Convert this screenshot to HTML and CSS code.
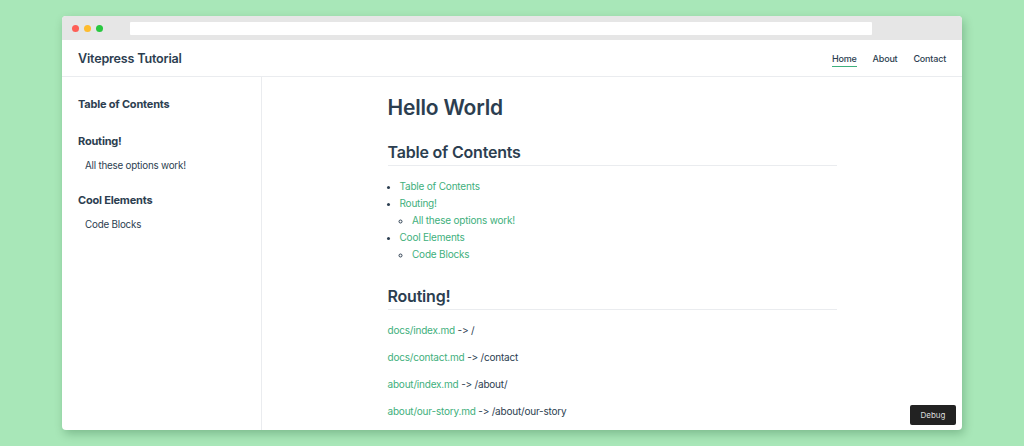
FILE: index.html
```html
<!DOCTYPE html>
<html lang="en">
<head>
<meta charset="utf-8">
<title>Vitepress Tutorial</title>
<link rel="stylesheet" href="styles.css">
</head>
<body>
<div class="window">
  <div class="titlebar">
    <div class="dots">
      <span class="dot red"></span>
      <span class="dot yellow"></span>
      <span class="dot green"></span>
    </div>
    <div class="urlbar"></div>
  </div>
  <header class="navbar">
    <a class="site-title" href="#">Vitepress Tutorial</a>
    <nav class="nav">
      <a class="nav-link active" href="#">Home</a>
      <a class="nav-link" href="#">About</a>
      <a class="nav-link" href="#">Contact</a>
    </nav>
  </header>
  <div class="main">
    <aside class="sidebar">
      <div class="side-group solo">
        <a class="side-heading" href="#">Table of Contents</a>
      </div>
      <div class="side-group">
        <a class="side-heading" href="#">Routing!</a>
        <a class="side-link" href="#">All these options work!</a>
      </div>
      <div class="side-group">
        <a class="side-heading" href="#">Cool Elements</a>
        <a class="side-link" href="#">Code Blocks</a>
      </div>
    </aside>
    <main class="content">
      <div class="doc">
        <h1>Hello World</h1>
        <h2 class="first-h2">Table of Contents</h2>
        <ul class="toc">
          <li><a href="#">Table of Contents</a></li>
          <li><a href="#">Routing!</a>
            <ul><li><a href="#">All these options work!</a></li></ul>
          </li>
          <li><a href="#">Cool Elements</a>
            <ul><li><a href="#">Code Blocks</a></li></ul>
          </li>
        </ul>
        <h2>Routing!</h2>
        <p><a href="#">docs/index.md</a> -&gt; /</p>
        <p><a href="#">docs/contact.md</a> -&gt; /contact</p>
        <p><a href="#">about/index.md</a> -&gt; /about/</p>
        <p><a href="#">about/our-story.md</a> -&gt; /about/our-story</p>
      </div>
      <button class="debug">Debug</button>
    </main>
  </div>
</div>
</body>
</html>
```
FILE: styles.css
```css
* { box-sizing: border-box; }

html, body {
  margin: 0;
  height: 100%;
}

body {
  background: #a8e7b8;
  padding: 16px 62px;
  font-family: "Inter", "Noto Sans", sans-serif;
  font-feature-settings: "calt" 0, "liga" 0;
  letter-spacing: -0.02em;
  color: #2c3e50;
  font-size: 10px;
  overflow: hidden;
}

a { text-decoration: none; color: inherit; }

.window {
  width: 900px;
  height: 414px;
  background: #fff;
  border-radius: 4px;
  box-shadow: 2px 4px 10px rgba(0, 60, 20, 0.25);
  overflow: hidden;
  display: flex;
  flex-direction: column;
}

.titlebar {
  height: 24px;
  flex: none;
  background: #e6e6e6;
  display: flex;
  align-items: center;
  padding-left: 10px;
}

.dots {
  display: flex;
  gap: 5px;
}

.dot {
  width: 7px;
  height: 7px;
  border-radius: 50%;
}
.dot.red { background: #fe5f57; }
.dot.yellow { background: #febc2e; }
.dot.green { background: #28c840; }

.urlbar {
  margin-left: 27px;
  margin-top: 1px;
  width: 742px;
  height: 13px;
  background: #fff;
  border-radius: 1px;
}

.navbar {
  height: 37px;
  flex: none;
  border-bottom: 1px solid #eaecef;
  display: flex;
  align-items: center;
  justify-content: space-between;
  padding: 0 16px;
}

.site-title {
  font-size: 12.6px;
  font-weight: 600;
  color: #2c3e50;
}

.nav {
  display: flex;
  gap: 16px;
}

.nav-link {
  font-size: 9px;
  font-weight: 500;
  line-height: 15px;
  padding-top: 1px;
  border-bottom: 1.5px solid transparent;
}

.nav-link.active {
  border-bottom-color: #3eaf7c;
}

.main {
  flex: 1;
  display: flex;
  min-height: 0;
}

.sidebar {
  width: 200px;
  flex: none;
  border-right: 1px solid #eaecef;
  padding: 19px 0 0 16px;
  display: flex;
  flex-direction: column;
}

.side-group {
  display: flex;
  flex-direction: column;
  margin-bottom: 18px;
}

.side-group.solo {
  margin-bottom: 21px;
}

.side-heading {
  font-size: 11px;
  font-weight: 700;
  line-height: 16px;
}

.side-link {
  font-size: 9.8px;
  padding-left: 7px;
  margin-top: 9px;
  line-height: 16px;
}

.content {
  flex: 1;
  position: relative;
  display: flex;
  justify-content: center;
}

.doc {
  width: 449px;
  padding-top: 17px;
}

h1 {
  margin: 0;
  font-size: 21px;
  font-weight: 600;
  line-height: 28px;
}

h2 {
  margin: 20px 0 0;
  font-size: 16px;
  font-weight: 600;
  line-height: 21px;
  padding-bottom: 2px;
  border-bottom: 1px solid #eaecef;
}

.toc + h2 {
  margin-top: 23px;
}

.toc {
  margin: 12px 0 0;
  padding-left: 12px;
  line-height: 17px;
}

.toc ul {
  margin: 0;
  padding-left: 12.5px;
  list-style-type: circle;
}

.toc a,
p a {
  color: #3eaf7c;
}

p {
  margin: 10px 0 0;
  line-height: 17px;
}

h2 + p {
  margin-top: 12px;
}

.debug {
  position: absolute;
  right: 6px;
  bottom: 5px;
  width: 46px;
  height: 20px;
  background: #222;
  color: #ddd;
  border: none;
  border-radius: 2px;
  font-family: "Inter", "Noto Sans", sans-serif;
  font-size: 8px;
  padding: 0;
}
```
